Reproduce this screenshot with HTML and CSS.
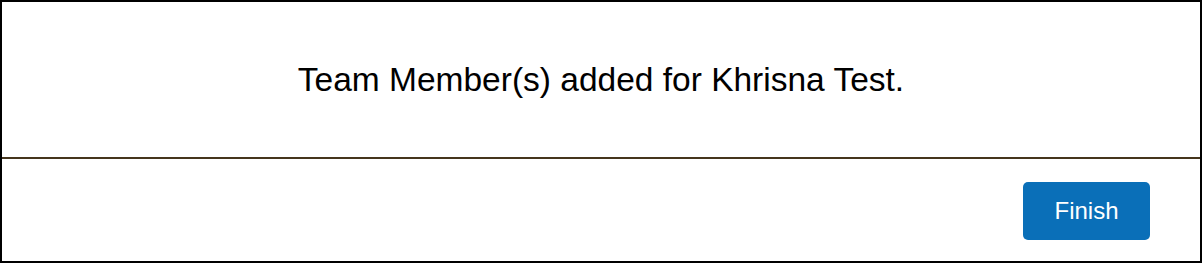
FILE: index.html
```html
<!DOCTYPE html>
<html lang="en">
<head>
<meta charset="utf-8">
<title>Team Members Added</title>
<link rel="stylesheet" href="styles.css">
</head>
<body>
<div class="dialog">
  <div class="dialog-body">
    <p class="message">Team Member(s) added for Khrisna Test.</p>
  </div>
  <div class="dialog-footer">
    <button class="btn-finish" type="button">Finish</button>
  </div>
</div>
</body>
</html>
```

FILE: styles.css
```css
html, body {
  margin: 0;
  padding: 0;
  background: #ffffff;
}

body {
  font-family: "Liberation Sans", Arial, sans-serif;
  color: #000000;
}

.dialog {
  box-sizing: border-box;
  width: 1202px;
  height: 263px;
  border: 2px solid #000000;
  display: flex;
  flex-direction: column;
}

.dialog-body {
  height: 155px;
  display: flex;
  align-items: center;
  justify-content: center;
  border-bottom: 2px solid #45351c;
}

.message {
  margin: 0;
  font-size: 33.5px;
  line-height: 38px;
}

.dialog-footer {
  flex: 1;
  display: flex;
  align-items: center;
  justify-content: flex-end;
  padding: 1px 50px 0 0;
}

.btn-finish {
  width: 127px;
  height: 58px;
  background: #0a6fb8;
  color: #ffffff;
  border: none;
  border-radius: 5px;
  font-family: "Liberation Sans", Arial, sans-serif;
  font-size: 24px;
  padding: 0;
  cursor: pointer;
}
```
